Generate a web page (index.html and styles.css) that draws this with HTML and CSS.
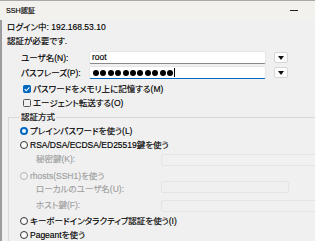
FILE: index.html
```html
<!DOCTYPE html>
<html lang="ja">
<head>
<meta charset="utf-8">
<title>SSH認証</title>
<link rel="stylesheet" href="styles.css">
</head>
<body>
<div class="win">
  <div class="titlebar">
    <span class="title">SSH認証</span>
    <span class="min"></span>
  </div>
  <div class="content">
    <div class="line l1">ログイン中: 192.168.53.10</div>
    <div class="line l2">認証が必要です.</div>
    <div class="field f-user">
      <span class="flabel">ユーザ名(N):</span>
      <div class="input">root</div>
      <div class="dd"><span class="tri"></span></div>
    </div>
    <div class="field f-pass">
      <span class="flabel">パスフレーズ(P):</span>
      <div class="input focus">
        <span class="dots"><i></i><i></i><i></i><i></i><i></i><i></i><i></i><i></i><i></i><i></i><i></i></span><span class="caret"></span>
      </div>
      <div class="dd"><span class="tri"></span></div>
    </div>
    <div class="check c1"><span class="box on"><svg viewBox="0 0 8 8" width="8" height="8"><path d="M1.6 4.2 L3.2 5.8 L6.4 2.4" fill="none" stroke="#fff" stroke-width="1.1"/></svg></span>パスワードをメモリ上に記憶する(M)</div>
    <div class="check c2"><span class="box"></span>エージェント転送する(O)</div>
    <fieldset class="group">
      <legend>認証方式</legend>
      <div class="radio r1"><span class="dot on"></span>プレインパスワードを使う(L)</div>
      <div class="radio r2"><span class="dot"></span>RSA/DSA/ECDSA/ED25519鍵を使う</div>
      <div class="sub s-key"><span class="slabel">秘密鍵(K):</span><div class="dbox wide"></div></div>
      <div class="radio r3 disabled"><span class="dot"></span>rhosts(SSH1)を使う</div>
      <div class="sub s-local"><span class="slabel low">ローカルのユーザ名(U):</span><div class="dbox narrow"></div></div>
      <div class="sub s-host"><span class="slabel">ホスト鍵(F):</span><div class="dbox wide"></div></div>
      <div class="radio r4"><span class="dot"></span>キーボードインタラクティブ認証を使う(I)</div>
      <div class="radio r5"><span class="dot"></span>Pageantを使う</div>
    </fieldset>
  </div>
</div>
</body>
</html>
```
FILE: styles.css
```css
html, body {
  margin: 0;
  padding: 0;
  width: 315px;
  height: 241px;
  overflow: hidden;
  background: #f0f0f0;
}
body {
  font-family: "Liberation Sans", "Noto Sans CJK JP", sans-serif;
  font-feature-settings: "palt";
  font-size: 8.5px;
  line-height: 12px;
  color: #000;
  -webkit-text-stroke: 0.15px currentColor;
}
.win {
  width: 315px;
  height: 241px;
  display: flex;
  flex-direction: column;
  overflow: hidden;
}
.titlebar {
  height: 19px;
  flex: none;
  border-top: 1px solid #a9a9a9;
  background: #f3f1ee;
  display: flex;
  align-items: center;
  justify-content: space-between;
  padding: 0 17px 0 6px;
}
.title {
  font-size: 7.2px;
  line-height: 10px;
  padding-top: 1px;
}
.min {
  width: 8px;
  height: 1px;
  background: #222;
}
.content {
  flex: 1;
  border-left: 2px solid #9c9c9c;
  padding-left: 5px;
  display: flex;
  flex-direction: column;
}
.line {
  height: 14px;
  line-height: 14px;
  white-space: nowrap;
}
.field {
  display: flex;
  align-items: center;
  height: 13px;
  padding-left: 14px;
}
.f-user { margin-top: 3px; }
.f-pass { margin-top: 2px; }
.flabel {
  width: 68px;
  flex: none;
  white-space: nowrap;
}
.input {
  width: 177px;
  height: 13px;
  box-sizing: border-box;
  flex: none;
  background: #fff;
  border: 1px solid #e6e6e6;
  border-bottom: 1px solid #8a8a8a;
  border-radius: 2px;
  padding-left: 2px;
  display: flex;
  align-items: center;
  line-height: 11px;
}
.input.focus {
  border-bottom: 1px solid #0067c0;
  padding-left: 3px;
}
.dots {
  display: flex;
  gap: 1.4px;
}
.dots i {
  width: 6px;
  height: 6px;
  border-radius: 50%;
  background: #000;
}
.caret {
  width: 1px;
  height: 9px;
  background: #000;
  margin-left: 1px;
}
.dd {
  width: 14px;
  height: 11px;
  box-sizing: border-box;
  margin-left: 8px;
  flex: none;
  background: #fdfdfd;
  border: 1px solid #d6d6d6;
  border-radius: 2px;
  display: flex;
  align-items: center;
  justify-content: center;
}
.tri {
  width: 0;
  height: 0;
  border-left: 3.5px solid transparent;
  border-right: 3.5px solid transparent;
  border-top: 4px solid #111;
}
.check {
  display: flex;
  align-items: center;
  height: 14px;
  padding-left: 16px;
  white-space: nowrap;
}
.c1 { margin-top: 3px; }
.box {
  width: 8px;
  height: 8px;
  box-sizing: border-box;
  border: 1px solid #555;
  border-radius: 1.5px;
  margin-right: 2px;
  flex: none;
  display: flex;
}
.box.on {
  background: #0067c0;
  border-color: #0067c0;
}
.box.on svg { margin: -1px; }
.group {
  margin: 1px 0 0 1px;
  padding: 0 0 0 11px;
  border: 1px solid #d9d9d9;
  border-right: none;
  border-bottom: none;
  min-width: 0;
}
.group legend {
  padding: 0 1px;
  margin-left: 0;
  line-height: 13px;
  white-space: nowrap;
}
.radio {
  display: flex;
  align-items: center;
  height: 14px;
  white-space: nowrap;
}
.dot {
  width: 8px;
  height: 8px;
  box-sizing: border-box;
  border: 1px solid #333;
  border-radius: 50%;
  margin-right: 2px;
  flex: none;
  background: #fafafa;
}
.dot.on {
  border: 2.5px solid #0067c0;
  background: #fff;
}
.disabled { color: #a0a0a0; }
.disabled .dot { border-color: #b5b5b5; background: #f0f0f0; }
.sub {
  display: flex;
  align-items: center;
  height: 13px;
  color: #a0a0a0;
  white-space: nowrap;
}
.slabel {
  width: 125px;
  padding-left: 16px;
  flex: none;
  line-height: 11px;
}
.slabel.low { padding-top: 5px; }
.dbox {
  height: 12px;
  box-sizing: border-box;
  border: 1px solid #e4e4e4;
  border-radius: 2px;
  background: #f0f0f0;
  flex: none;
}
.dbox.wide { width: 180px; }
.dbox.narrow { width: 128px; }
.s-key { margin-top: 1px; }
.r3 { margin-top: 4px; height: 12px; line-height: 11px; }
.s-local { margin-top: -2px; }
.s-host { margin-top: 6px; }
.r4 { margin-top: 2px; }
```
